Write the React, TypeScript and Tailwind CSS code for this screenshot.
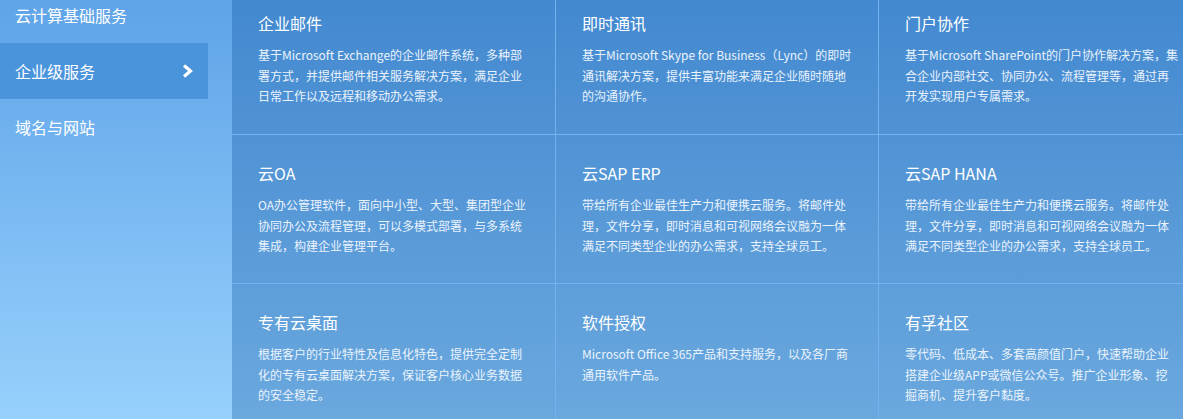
import React from "react";

interface Service {
  title: string;
  desc: string;
}

const menu = ["云计算基础服务", "企业级服务", "域名与网站"];

const services: Service[] = [
  {
    title: "企业邮件",
    desc: "基于Microsoft Exchange的企业邮件系统，多种部署方式，并提供邮件相关服务解决方案，满足企业日常工作以及远程和移动办公需求。",
  },
  {
    title: "即时通讯",
    desc: "基于Microsoft Skype for Business（Lync）的即时通讯解决方案，提供丰富功能来满足企业随时随地的沟通协作。",
  },
  {
    title: "门户协作",
    desc: "基于Microsoft SharePoint的门户协作解决方案，集合企业内部社交、协同办公、流程管理等，通过再开发实现用户专属需求。",
  },
  {
    title: "云OA",
    desc: "OA办公管理软件，面向中小型、大型、集团型企业协同办公及流程管理，可以多模式部署，与多系统集成，构建企业管理平台。",
  },
  {
    title: "云SAP ERP",
    desc: "带给所有企业最佳生产力和便携云服务。将邮件处理，文件分享，即时消息和可视网络会议融为一体满足不同类型企业的办公需求，支持全球员工。",
  },
  {
    title: "云SAP HANA",
    desc: "带给所有企业最佳生产力和便携云服务。将邮件处理，文件分享，即时消息和可视网络会议融为一体满足不同类型企业的办公需求，支持全球员工。",
  },
  {
    title: "专有云桌面",
    desc: "根据客户的行业特性及信息化特色，提供完全定制化的专有云桌面解决方案，保证客户核心业务数据的安全稳定。",
  },
  {
    title: "软件授权",
    desc: "Microsoft Office 365产品和支持服务，以及各厂商通用软件产品。",
  },
  {
    title: "有孚社区",
    desc: "零代码、低成本、多套高颜值门户，快速帮助企业搭建企业级APP或微信公众号。推广企业形象、挖掘商机、提升客户黏度。",
  },
];

function Chevron() {
  return (
    <svg width="12" height="14" viewBox="0 0 12 14" fill="none">
      <path
        d="M2 1.5 L8.5 7 L2 12.5"
        stroke="white"
        strokeWidth="3.2"
        strokeLinejoin="miter"
      />
    </svg>
  );
}

export default function App() {
  return (
    <div className="flex h-[419px] w-[1183px] overflow-hidden font-['Noto_Sans_CJK_SC',sans-serif] text-white">
      <aside className="w-[232px] shrink-0 bg-gradient-to-b from-[#5ea4e8] to-[#97d0fc]">
        <ul className="-mt-[13px] w-[208px]">
          {menu.map((item, i) => (
            <li
              key={item}
              className={
                i === 1
                  ? "flex h-[56px] items-center justify-between bg-[#4a94dc] pl-[15px] pr-[14px] text-base"
                  : "flex h-[56px] items-center pl-[15px] text-base"
              }
            >
              <span>{item}</span>
              {i === 1 && <Chevron />}
            </li>
          ))}
        </ul>
      </aside>
      <main className="flex-1 overflow-hidden bg-gradient-to-b from-[#4389d0] to-[#6aa8de]">
        <div className="-mt-[15px] grid w-[969px] grid-cols-[323px_323px_323px]">
          {services.map((s, i) => (
            <div
              key={s.title}
              className={[
                "h-[149px] border-[#73b2ef] pt-[26px] pr-[23px] pl-[26px]",
                i % 3 !== 0 ? "border-l" : "",
                i >= 3 ? "border-t" : "",
              ].join(" ")}
            >
              <h3 className="text-base leading-6 font-normal">{s.title}</h3>
              <p className="mt-[10px] text-xs leading-[20.5px] text-[#eaf3fc]">
                {s.desc}
              </p>
            </div>
          ))}
        </div>
      </main>
    </div>
  );
}
